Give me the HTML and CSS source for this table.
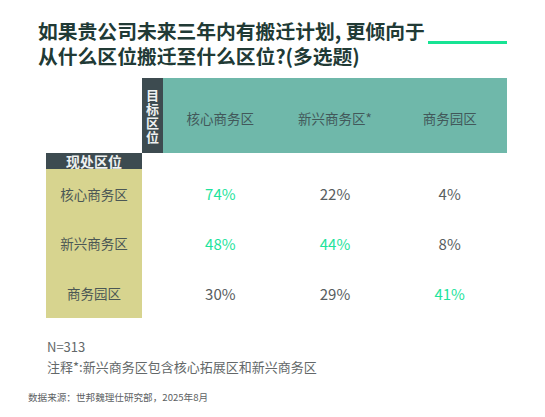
FILE: index.html
```html
<!DOCTYPE html>
<html lang="zh-CN">

<head>
    <meta charset="UTF-8">
    <meta name="viewport" content="width=device-width, initial-scale=1.0">
    <title>搬迁计划</title>
    <link rel="stylesheet" href="styles.css">
</head>

<body>
    <h1 class="title">如果贵公司未来三年内有搬迁计划, 更倾向于<span class="title-bar"></span><br>从什么区位搬迁至什么区位?(多选题)</h1>

    <div class="matrix">
        <div class="corner"></div>
        <div class="to-label"><span>目标区位</span></div>
        <div class="col-head">核心商务区</div>
        <div class="col-head">新兴商务区*</div>
        <div class="col-head">商务园区</div>

        <div class="from-label">现处区位</div>
        <div class="spacer"></div>

        <div class="row-head">核心商务区</div>
        <div></div>
        <div class="val hi">74%</div>
        <div class="val">22%</div>
        <div class="val">4%</div>

        <div class="row-head">新兴商务区</div>
        <div></div>
        <div class="val hi">48%</div>
        <div class="val hi">44%</div>
        <div class="val">8%</div>

        <div class="row-head">商务园区</div>
        <div></div>
        <div class="val">30%</div>
        <div class="val">29%</div>
        <div class="val hi">41%</div>
    </div>

    <div class="notes">
        <p>N=313</p>
        <p>注释*:新兴商务区包含核心拓展区和新兴商务区</p>
    </div>
    <p class="source">数据来源：世邦魏理仕研究部，2025年8月</p>
</body>

</html>
```

FILE: styles.css
```css
* {
    box-sizing: border-box;
}

body {
    margin: 0;
    width: 545px;
    height: 417px;
    background: #fff;
    font-family: "Noto Sans CJK SC", "Noto Sans", sans-serif;
    color: #555b5d;
}

p {
    margin: 0;
}

.title {
    margin: 19px 0 0 38px;
    font-size: 19.8px;
    line-height: 24px;
    font-weight: 700;
    color: #213a35;
}

.title-bar {
    display: inline-block;
    width: 79px;
    height: 3px;
    margin-left: 3px;
    vertical-align: -5px;
    background: #17e394;
}

.matrix {
    display: grid;
    grid-template-columns: 96px 21px repeat(3, 1fr);
    grid-template-rows: 75px 16px repeat(3, 1fr);
    width: 461px;
    height: 240px;
    margin: 10px 0 0 46px;
}

.to-label {
    display: flex;
    align-items: center;
    justify-content: center;
    background: #3d4b50;
    color: #eef1f1;
}

.to-label span {
    display: block;
    width: 14px;
    font-size: 13px;
    line-height: 14px;
    font-weight: 700;
    text-align: center;
    word-break: break-all;
}

.col-head {
    display: flex;
    align-items: center;
    justify-content: center;
    padding-top: 4px;
    background: #6fb8aa;
    color: #42585a;
    font-size: 13.5px;
}

.from-label {
    display: flex;
    align-items: center;
    justify-content: center;
    background: #3d4b50;
    color: #eef1f1;
    font-size: 14px;
    line-height: 16px;
    font-weight: 700;
}

.spacer {
    grid-column: 2 / -1;
}

.row-head {
    display: flex;
    align-items: center;
    justify-content: center;
    background: #d7d48f;
    color: #4b5755;
    font-size: 13.5px;
}

.val {
    display: flex;
    align-items: center;
    justify-content: center;
    font-size: 15px;
    color: #585d60;
}

.val.hi {
    color: #1ee39c;
}

.notes {
    margin: 19px 0 0 47px;
    font-size: 13px;
    line-height: 20px;
    color: #636869;
}

.source {
    margin: 13px 0 0 28px;
    font-size: 9.6px;
    line-height: 14px;
    color: #5c6163;
}
```
